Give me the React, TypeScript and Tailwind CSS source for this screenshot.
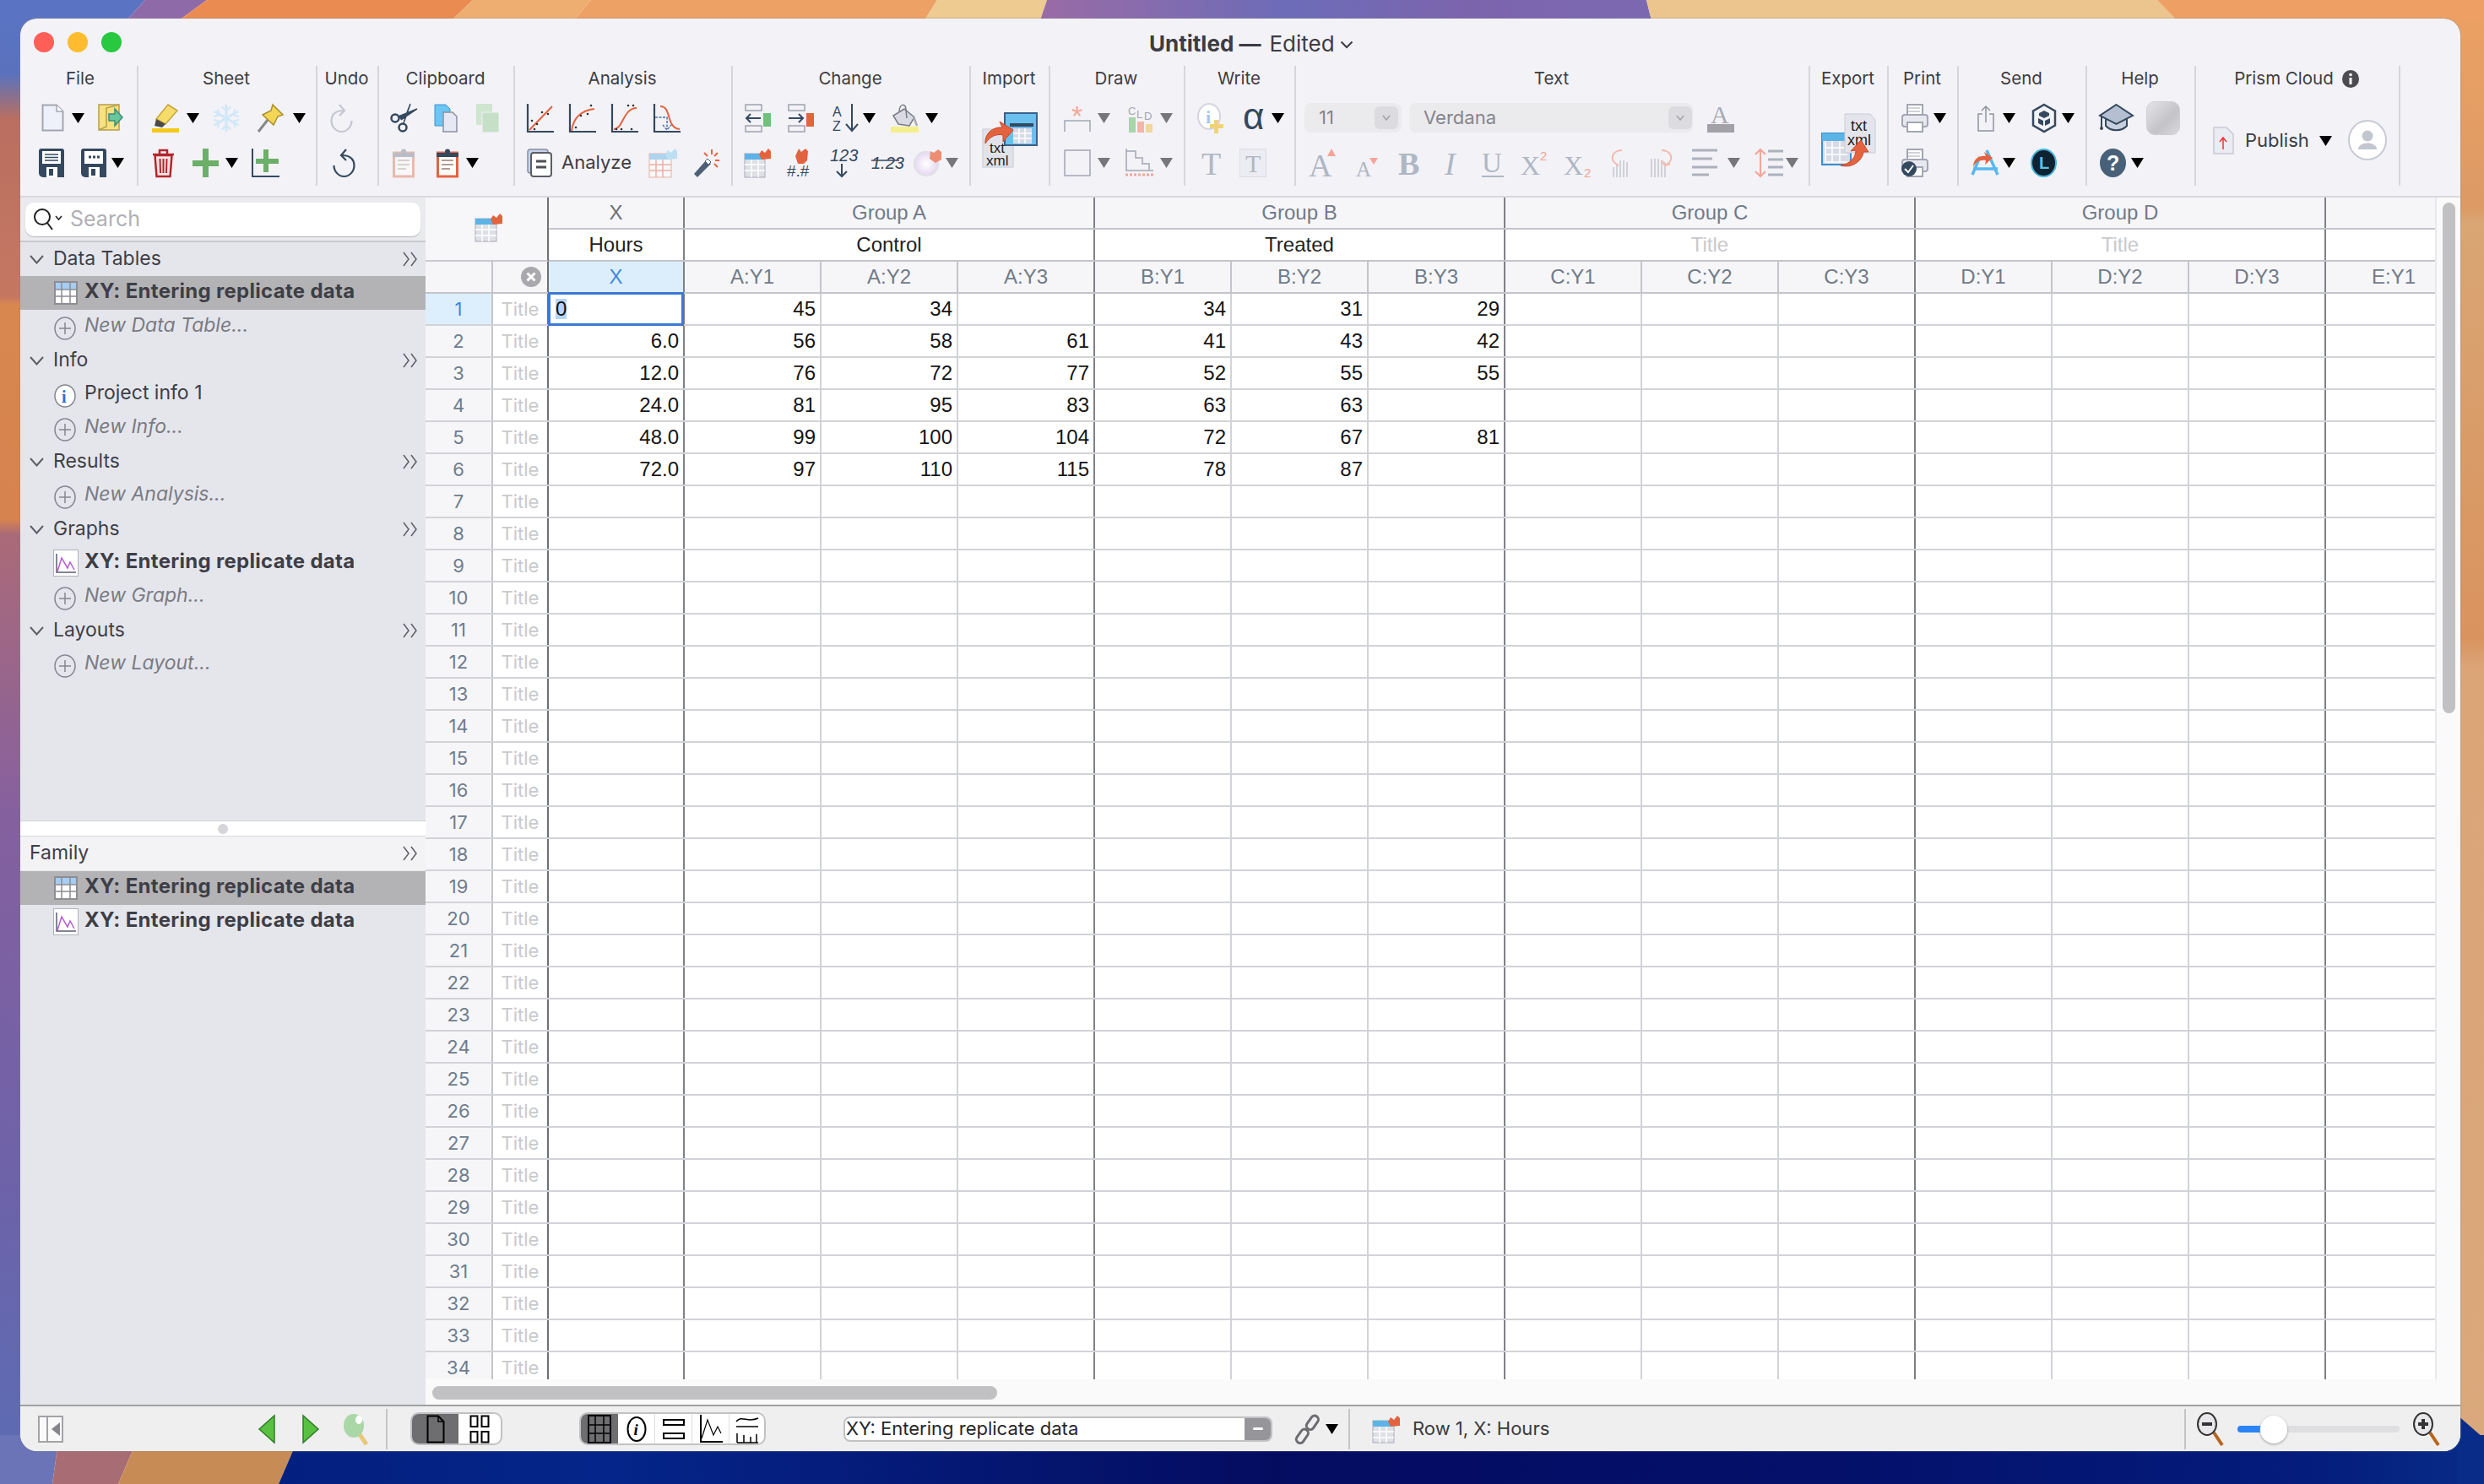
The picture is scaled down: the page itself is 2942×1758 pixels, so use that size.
import React from "react";

const NAVY = "#34495f";
const REDO = "#e4633f";

type P = { className?: string };
const Svg = ({ w, h, className = "", children }: { w: number; h: number; className?: string; children?: React.ReactNode }) => (
  <svg width={w} height={h} viewBox={`0 0 ${w} ${h}`} className={`shrink-0 overflow-visible ${className}`} fill="none">
    {children}
  </svg>
);

const Tri = ({ className = "", gray = false }: P & { gray?: boolean }) => (
  <Svg w={15} h={13} className={className}>
    <path d="M0 1H15L7.5 13z" fill={gray ? "#77777b" : "#000"} />
  </Svg>
);

const Doc = ({ className }: P) => (
  <Svg w={27} h={33} className={className}>
    <path d="M1.5 1.5H18L25.5 9V31.5H1.5z" fill="#eef0fa" stroke="#a3a6b2" strokeWidth="2" />
    <path d="M18 1.5V9H25.5" fill="#fff" stroke="#a3a6b2" strokeWidth="1.5" />
  </Svg>
);
const Folder = ({ className }: P) => (
  <Svg w={30} h={33} className={className}>
    <path d="M1 1H25V31H1z" fill="#f7e27e" stroke="#b69f4e" strokeWidth="1.5" />
    <path d="M1 31L10 27V5L25 1" stroke="#b69f4e" strokeWidth="1.5" />
    <path d="M13 12H20V6L29 16L20 26V20H13z" fill="#67c89e" stroke="#3e8f72" strokeWidth="1.5" />
  </Svg>
);
const Floppy = ({ className, dots = false }: P & { dots?: boolean }) => (
  <Svg w={30} h={34} className={className}>
    <path d="M3 0H27a3 3 0 0 1 3 3V34H5a5 5 0 0 1-5-5V3a3 3 0 0 1 3-3z" fill={NAVY} />
    <rect x="4" y="3" width="22" height="15" fill="#fff" />
    {dots ? (
      <path d="M9 10h3M14 10h3M19 10h3" stroke={NAVY} strokeWidth="3" />
    ) : (
      <path d="M7 7h16M7 10.500h16M7 14h16" stroke={NAVY} strokeWidth="1.500" />
    )}
    <rect x="9" y="22" width="13" height="12" fill="#fff" />
    <rect x="12" y="24" width="5" height="8" fill={NAVY} />
  </Svg>
);
const Highlighter = ({ className }: P) => (
  <Svg w={32} h={34} className={className}>
    <path d="M19 1L30 8L16 24L5 18z" fill="#f6dc6a" stroke="#c8a63a" strokeWidth="1.500" />
    <path d="M5 18L16 24L12 28L3 26z" fill="#4a4a4a" />
    <rect x="0" y="29" width="32" height="5" fill="#f4c81e" />
  </Svg>
);
const Snow = ({ className, color = "#cfe8f8" }: P & { color?: string }) => (
  <Svg w={34} h={34} className={className}>
    <g stroke={color} strokeWidth="3" strokeLinecap="round">
      <path d="M17 2V32M4 9.500L30 24.500M4 24.500L30 9.500" />
      <path d="M12 4L17 8L22 4M12 30L17 26L22 30M3 15L8.500 13L7 7M31 15L25.500 13L27 7M3 19L8.500 21L7 27M31 19L25.500 21L27 27" strokeWidth="2" />
    </g>
  </Svg>
);
const Pin = ({ className }: P) => (
  <Svg w={32} h={34} className={className}>
    <path d="M2 33L13 19" stroke="#888" strokeWidth="3" />
    <path d="M19 1L31 13L25 15L20 25L7 13L17 8z" fill="#f3d653" stroke="#a98f2e" strokeWidth="1.500" />
  </Svg>
);
const Trash = ({ className }: P) => (
  <Svg w={27} h={34} className={className}>
    <path d="M1 7H26M9 6V2H18V6" stroke="#b3262b" strokeWidth="2.500" />
    <path d="M3.500 8L5.500 33H21.500L23.500 8z" fill="#f7e6e6" stroke="#b3262b" strokeWidth="2.500" />
    <path d="M9.500 12L10 29M13.500 12V29M17.500 12L17 29" stroke="#b3262b" strokeWidth="2" />
  </Svg>
);
const Plus = ({ className }: P) => (
  <Svg w={31} h={34} className={className}>
    <path d="M12 0H19V14H31V21H19V34H12V21H0V14H12z" fill="#6caf68" />
  </Svg>
);
const PlusAxis = ({ className }: P) => (
  <Svg w={33} h={34} className={className}>
    <path d="M1 0V33H33" stroke={NAVY} strokeWidth="2" />
    <path d="M14 1H20V12H32V18H20V28H14V18H5V12H14z" fill="#6caf68" />
  </Svg>
);
const Redo = ({ className, color = "#c4c7cf", flip = false }: P & { color?: string; flip?: boolean }) => (
  <Svg w={27} h={34} className={className}>
    <g transform={flip ? "translate(27 0) scale(-1 1)" : undefined} stroke={color} strokeWidth="2.200">
      <path d="M16 8C5 8 1.500 14 1.500 20C1.500 27 7 33 13.500 33C20 33 25.500 27 25.500 20" />
      <path d="M11 1L17 8L11 14" />
    </g>
  </Svg>
);
const Scissors = ({ className }: P) => (
  <Svg w={33} h={34} className={className}>
    <circle cx="6" cy="17" r="4.500" stroke={NAVY} strokeWidth="2.500" />
    <circle cx="15" cy="28" r="4.500" stroke={NAVY} strokeWidth="2.500" />
    <path d="M10 15L32 6L13 19M16 23L24 0L17 18" fill={NAVY} stroke={NAVY} strokeWidth="1.500" />
  </Svg>
);
const CopyI = ({ className }: P) => (
  <Svg w={28} h={34} className={className}>
    <path d="M1 1H14L19 6V26H1z" fill="#6cc5f2" stroke="#3f95d2" />
    <path d="M11 10H22L27 15V33H11z" fill="#e6e8f4" stroke="#8c90a0" strokeWidth="1.500" />
  </Svg>
);
const CopyG = ({ className }: P) => (
  <Svg w={27} h={34} className={className}>
    <rect x="0" y="0" width="19" height="25" fill="#cfe5cf" />
    <rect x="7" y="10" width="20" height="24" fill="#c6e0c8" stroke="#f3f2f7" />
  </Svg>
);
const Clip = ({ className, faded = false }: P & { faded?: boolean }) => (
  <Svg w={26} h={34} className={className}>
    <g opacity={faded ? 0.4 : 1}>
      <rect x="1.500" y="5" width="23" height="28" fill="#fff" stroke={REDO} strokeWidth="3" />
      <path d="M6 14H20M6 19H20M6 24H16" stroke="#9a7f70" strokeWidth="1.500" />
    </g>
    <rect x="0" y="5" width="26" height="5" fill={faded ? "#b9bdc6" : NAVY} />
    <circle cx="13" cy="3.500" r="3" fill={faded ? "#b9bdc6" : NAVY} />
  </Svg>
);
const Graph = ({ className, d, dots, drop = false }: P & { d: string; dots: [number, number][]; drop?: boolean }) => (
  <Svg w={32} h={34} className={className}>
    <path d="M1 0V33H32" stroke={NAVY} strokeWidth="2.200" />
    <path d={d} stroke={REDO} strokeWidth="2" />
    {drop && <path d="M2 16H16V30M11 25L16 31L21 25" stroke="#4a76a8" strokeWidth="1.500" strokeDasharray="3 1.500" />}
    {dots.map((c, i) => (
      <circle key={i} cx={c[0]} cy={c[1]} r="1.300" fill="#333" />
    ))}
  </Svg>
);
const AnalyzeI = ({ className }: P) => (
  <Svg w={30} h={34} className={className}>
    <rect x="1" y="1" width="24" height="28" rx="3" fill="#c5d3ee" stroke="#8b8f9a" strokeWidth="1.500" />
    <rect x="5" y="5" width="24" height="28" rx="3" fill="#fff" stroke="#5c5e64" strokeWidth="2" />
    <path d="M11 15H23M11 22H23" stroke="#4d4f55" strokeWidth="3" />
  </Svg>
);
const Tbl = ({ className, tag = true, faded = false, w = 31, h = 34 }: P & { tag?: boolean; faded?: boolean; w?: number; h?: number }) => (
  <Svg w={w} h={h} className={className}>
    <g opacity={faded ? 0.45 : 1}>
      <rect x="0" y="6" width={w - 7} height={h - 6} fill={faded ? "#fff" : "#dfe0e6"} stroke={faded ? REDO : "#a8abb5"} strokeWidth={1} />
      <rect x="0" y="6" width={w - 7} height="7" fill="#5cb4e6" />
      <path d={`M8 13V${h}M16 13V${h}M0 19H${w - 7}M0 26H${w - 7}`} stroke={faded ? REDO : "#fff"} strokeWidth="1.500" />
    </g>
    {tag && <path d={`M${w - 11} 2L${w - 7} 5L${w - 3} 0L${w} 3V12L${w - 11} 13L${w - 14} 7z`} fill={faded ? "#bcdff2" : REDO} />}
  </Svg>
);
const ArrowCols = ({ className, right = false, color = "#6fc27a" }: P & { right?: boolean; color?: string }) => (
  <Svg w={32} h={34} className={className}>
    <rect x="1" y="1" width="19" height="7" stroke="#9fa3ae" strokeWidth="1.500" />
    <rect x="1" y="26" width="19" height="7" stroke="#9fa3ae" strokeWidth="1.500" />
    <rect x="22" y="11" width="9" height="16" fill={color} />
    <path d={right ? "M1 17H18M13 12L18 17L13 22" : "M19 17H2M7 12L2 17L7 22"} stroke={NAVY} strokeWidth="2" />
  </Svg>
);
const Sort = ({ className }: P) => (
  <Svg w={31} h={34} className={className}>
    <text x="0" y="15" fontSize="16" fontFamily="Liberation Sans" fill={NAVY}>A</text>
    <text x="0" y="32" fontSize="16" fontFamily="Liberation Sans" fill={NAVY}>Z</text>
    <path d="M23 0V32M16 24L23 32L30 24" stroke={NAVY} strokeWidth="2" />
  </Svg>
);
const Bucket = ({ className }: P) => (
  <Svg w={33} h={34} className={className}>
    <path d="M16 6L28 16L22 26L9 24L3 14z" fill="#d9dae4" stroke="#777b86" strokeWidth="1.500" />
    <path d="M10 10C10 -1 18 -1 18 7L19 17" stroke="#777b86" strokeWidth="1.500" />
    <path d="M27 15L31 26" stroke="#a9abb3" strokeWidth="2.500" />
    <rect x="0" y="27" width="33" height="7" fill="#f4ef8c" />
  </Svg>
);
const HashI = ({ className }: P) => (
  <Svg w={31} h={34} className={className}>
    <path d="M14 0L17 4L22 0L25 3L24 14L20 18H13L10 9z" fill={REDO} />
    <text x="0" y="33" fontSize="19" fontFamily="Liberation Sans" fill={NAVY}>#.#</text>
  </Svg>
);
const N123 = ({ className }: P) => (
  <Svg w={30} h={34} className={className}>
    <text x="0" y="15" fontSize="20" fontStyle="italic" fontFamily="Liberation Sans" fill={NAVY}>123</text>
    <path d="M14 18V33M8 27L14 33L20 27" stroke={NAVY} strokeWidth="2" />
  </Svg>
);
const N123b = ({ className }: P) => (
  <Svg w={33} h={20} className={className}>
    <text x="0" y="17" fontSize="20" fontStyle="italic" fontFamily="Liberation Sans" fill={NAVY}>1.23</text>
    <path d="M0 7L33 7" stroke={NAVY} strokeWidth="1.500" />
  </Svg>
);
const Wheel = ({ className }: P) => (
  <Svg w={33} h={34} className={className}>
    <defs>
      <radialGradient id="wh" cx="50%" cy="50%" r="60%">
        <stop offset="0" stopColor="#fff" />
        <stop offset="0.7" stopColor="#e8dcf2" />
        <stop offset="1" stopColor="#cfe3c2" />
      </radialGradient>
    </defs>
    <circle cx="15" cy="18" r="15" fill="url(#wh)" />
    <path d="M20 3L24 5L29 1L33 4V13L26 17L19 12z" fill="#ef8d72" />
  </Svg>
);
const ImportI = ({ className, exportMode = false }: P & { exportMode?: boolean }) =>
  exportMode ? (
    <Svg w={63} h={65} className={className}>
      <rect x="0" y="24" width="34" height="37" fill="#d8dae6" stroke="#3d8ed0" strokeWidth="2" />
      <rect x="0" y="24" width="34" height="9" fill="#5cb4e6" />
      <path d="M4 33V58H30M4 41H30M4 49H30M12 33V58M21 33V58" stroke="#fff" strokeWidth="1.500" />
      <path d="M27 1H57L63 8V47H27z" fill="#e4e5ec" stroke="#c8cad3" />
      <text x="34" y="21" fontSize="18" fontFamily="Liberation Sans" fill="#222">txt</text>
      <text x="30" y="38" fontSize="18" fontFamily="Liberation Sans" fill="#222">xml</text>
      <path d="M22 62C34 60 40 52 40 44L34 45L46 32L55 46L49 46C48 56 36 66 22 62z" fill={REDO} stroke="#c7492a" />
    </Svg>
  ) : (
    <Svg w={64} h={65} className={className}>
      <rect x="0" y="19" width="36" height="45" fill="#e2e3ea" stroke="#c8cad3" />
      <rect x="26" y="0" width="38" height="38" fill="#6bc1ee" stroke="#39618a" strokeWidth="2" />
      <rect x="32" y="12" width="28" height="4" fill={NAVY} />
      <path d="M36 18H58V36H36z" fill="#d8dae6" />
      <path d="M36 24H58M36 30H58M43 18V36M50 18V36" stroke="#fff" strokeWidth="1.500" />
      <path d="M3 36C2 24 12 16 23 17L20 10L36 20L24 34L24 26C16 24 8 28 3 36z" fill={REDO} stroke="#c7492a" />
      <text x="8" y="47" fontSize="17" fontFamily="Liberation Sans" fill="#222">txt</text>
      <text x="4" y="62" fontSize="17" fontFamily="Liberation Sans" fill="#222">xml</text>
    </Svg>
  );
const Star = ({ className }: P) => (
  <Svg w={32} h={34} className={className}>
    <text x="9" y="26" fontSize="34" fontFamily="Liberation Sans" fill="#f2a89a">*</text>
    <path d="M1 33V20H31V33" stroke="#a3a6b2" strokeWidth="1.500" />
  </Svg>
);
const Cld = ({ className }: P) => (
  <Svg w={29} h={34} className={className}>
    <text x="0" y="13" fontSize="13" fontFamily="Liberation Sans" fill="#a0a8b4">C</text>
    <text x="10" y="17" fontSize="13" fontFamily="Liberation Sans" fill="#a0a8b4">L</text>
    <text x="19" y="19" fontSize="13" fontFamily="Liberation Sans" fill="#a0a8b4">D</text>
    <rect x="1" y="16" width="8" height="18" fill="#a7d4a9" />
    <rect x="11" y="21" width="8" height="13" fill="#f3b5a7" />
    <rect x="21" y="24" width="8" height="10" fill="#f2d79a" />
  </Svg>
);
const RectI = ({ className }: P) => (
  <Svg w={32} h={32} className={className}>
    <rect x="1" y="1" width="30" height="30" stroke="#a3a6b2" strokeWidth="1.500" />
  </Svg>
);
const Step = ({ className }: P) => (
  <Svg w={33} h={34} className={className}>
    <path d="M1 0V26H33" stroke="#a3a6b2" strokeWidth="1.500" />
    <path d="M1 3H12V11H20V18H28V25" stroke="#a3a6b2" strokeWidth="1.500" />
    <path d="M0 31H33" stroke="#f2a89a" strokeWidth="3" strokeDasharray="3 2" />
  </Svg>
);
const InfoPlus = ({ className }: P) => (
  <Svg w={33} h={36} className={className}>
    <ellipse cx="14" cy="16" rx="13" ry="15" fill="#fff" stroke="#d3d5dc" strokeWidth="2" />
    <text x="10" y="24" fontSize="22" fontWeight="700" fontFamily="Liberation Serif" fill="#a8c6ea">i</text>
    <path d="M20 20H25V25H31V30H25V36H20V30H15V25H20z" fill="#f1d27c" />
  </Svg>
);
const Serif = ({ t, w, h, size, x, y, color = "#aeb7c4", weight, sty, className, fam = "Liberation Serif" }: P & { t: string; w: number; h: number; size: number; x: number; y: number; color?: string; weight?: number; sty?: string; fam?: string }) => (
  <Svg w={w} h={h} className={className}>
    <text x={x} y={y} fontSize={size} fontWeight={weight} fontStyle={sty} fontFamily={fam} fill={color}>
      {t}
    </text>
  </Svg>
);
const BigA = ({ className, small = false, down = false }: P & { small?: boolean; down?: boolean }) => (
  <Svg w={small ? 26 : 32} h={34} className={className}>
    <text x="0" y="33" fontSize={small ? 25 : 38} fontFamily="Liberation Serif" fill="#aeb7c4">A</text>
    {down ? <path d="M16 11H26L21 19z" fill="#f4a596" /> : <path d="M22 9H32L27 0z" fill="#f4a596" />}
  </Svg>
);
const Sup = ({ className, sub = false }: P & { sub?: boolean }) => (
  <Svg w={34} h={34} className={className}>
    <text x="0" y="31" fontSize="32" fontFamily="Liberation Serif" fill="#aeb7c4">X</text>
    <text x={sub ? 24 : 23} y={sub ? 34 : 14} fontSize="15" fontFamily="Liberation Sans" fill="#f4a596">2</text>
  </Svg>
);
const Bars = ({ className, right = false }: P & { right?: boolean }) => (
  <Svg w={30} h={34} className={className}>
    <path d={right ? "M2 12V34M6 12V34M10 12V34M14 14V34M18 16V34" : "M6 22V34M10 18V34M14 14V34M18 14V34M22 16V34"} stroke="#c4c7ce" strokeWidth="1.500" />
    <path d={right ? "M14 2C26 2 30 14 18 20M14 14L18 20L24 18" : "M16 2C4 2 0 14 12 20"} stroke="#f6b8ab" strokeWidth="2" />
  </Svg>
);
const Align = ({ className }: P) => (
  <Svg w={34} h={33} className={className}>
    <path d="M0 2H30M0 12H24M0 22H30M0 31H20" stroke="#adb1bb" strokeWidth="3" />
  </Svg>
);
const LineH = ({ className }: P) => (
  <Svg w={34} h={34} className={className}>
    <path d="M7 1V33M1 7L7 1L13 7M1 27L7 33L13 27" stroke="#f4a596" strokeWidth="2" />
    <path d="M16 3H34M16 13H34M16 22H34M16 31H34" stroke="#adb1bb" strokeWidth="3" />
  </Svg>
);
const Printer = ({ className, check = false }: P & { check?: boolean }) => (
  <Svg w={32} h={34} className={className}>
    <rect x="7" y="1" width="18" height="12" fill="#fff" stroke="#a3a6b2" strokeWidth="2" />
    <path d="M8 5H22M8 9H22" stroke="#a3a6b2" />
    <rect x="1" y="13" width="30" height="14" rx="3" fill="#e7e8f0" stroke="#a3a6b2" strokeWidth="2" />
    <rect x="7" y="22" width="18" height="11" fill="#fff" stroke="#a3a6b2" strokeWidth="2" />
    {check && (
      <>
        <circle cx="9" cy="24" r="9" fill={NAVY} />
        <path d="M4 24L8 28L14 20" stroke="#fff" strokeWidth="2" />
      </>
    )}
  </Svg>
);
const Share = ({ className }: P) => (
  <Svg w={20} h={32} className={className}>
    <path d="M6 11H1V31H19V11H14" stroke="#8f939e" strokeWidth="1.500" />
    <path d="M10 21V2M5 7L10 2L15 7" stroke="#8f939e" strokeWidth="1.500" />
  </Svg>
);
const Hex = ({ className }: P) => (
  <Svg w={28} h={34} className={className}>
    <path d="M14 1L27 8.500V25.500L14 33L1 25.500V8.500z" stroke={NAVY} strokeWidth="2.500" />
    <path d="M8 11L14 8L20 11V14L14 17L8 14zM7 17L13 20V26L7 23zM21 17L15 20V26L21 23z" fill={NAVY} />
  </Svg>
);
const AppI = ({ className }: P) => (
  <Svg w={33} h={34} className={className}>
    <path d="M19 2L32 31M3 24H32M11 10L2 31" stroke="#58b9ee" strokeWidth="3.500" />
    <path d="M3 22C3 12 10 8 18 9L16 4L26 11L17 19L18 14C10 13 6 16 3 22z" fill={REDO} />
  </Svg>
);
const LCircle = ({ className }: P) => (
  <Svg w={31} h={34} className={className}>
    <ellipse cx="15.500" cy="17" rx="14.500" ry="16" fill="#0e2231" stroke="#43b4d8" strokeWidth="2" />
    <text x="10" y="24" fontSize="20" fontWeight="700" fontFamily="Liberation Sans" fill="#5cc1e6">L</text>
  </Svg>
);
const Cap = ({ className }: P) => (
  <Svg w={41} h={34} className={className}>
    <path d="M8 14V26C14 33 27 33 33 26V14" fill="#c7d0de" stroke={NAVY} strokeWidth="2" />
    <path d="M20.500 1L40 14L20.500 24L1 14z" fill="#b4c0d2" stroke={NAVY} strokeWidth="2" />
    <path d="M3 15V28" stroke={NAVY} strokeWidth="2" />
    <circle cx="3" cy="29" r="2" fill={NAVY} />
  </Svg>
);
const Help = ({ className }: P) => (
  <Svg w={31} h={34} className={className}>
    <ellipse cx="15.500" cy="17" rx="15.500" ry="17" fill="#486178" />
    <text x="8" y="26" fontSize="25" fontWeight="700" fontFamily="Liberation Sans" fill="#fff">?</text>
  </Svg>
);
const DocUp = ({ className }: P) => (
  <Svg w={25} h={33} className={className}>
    <path d="M1 1H16L24 9V32H1z" fill="#ebebf2" stroke="#c9cad2" strokeWidth="1.500" />
    <path d="M12 27V13M8 18L12 13L16 18" stroke="#e23b2d" strokeWidth="1.500" />
  </Svg>
);
const Avatar = ({ className }: P) => (
  <Svg w={46} h={48} className={className}>
    <ellipse cx="23" cy="24" rx="22" ry="23" fill="#fff" stroke="#c8cbd3" strokeWidth="2" />
    <circle cx="23" cy="19" r="6.500" fill="#c2c6ce" />
    <path d="M12 35C12 25 34 25 34 35z" fill="#c2c6ce" />
  </Svg>
);
const Wand = ({ className }: P) => (
  <Svg w={31} h={34} className={className}>
    <path d="M1 30L16 13L21 18L5 34z" fill="#4d6075" />
    <path d="M14 15L17 12L21 16L18 19z" fill="#fff" stroke="#4d6075" />
    <path d="M22 1V7M29 5L25 9M31 14H26M29 22L25 18M13 5L17 9" stroke={REDO} strokeWidth="2" />
  </Svg>
);

const Sec = ({ w, label, children, center = false, shift = "" }: { w: string; label: React.ReactNode; children: React.ReactNode; center?: boolean; shift?: string }) => (
  <div className={`${w} h-[142px] shrink-0 border-r-2 border-[#d6d6db]`}>
    <div className={`h-[30px] flex items-center justify-center text-[#3d3d42] text-[20.5px] whitespace-nowrap pr-[2px] ${shift}`}>{label}</div>
    <div className={`mt-[5px] h-[106px] flex flex-col ${center ? "justify-center" : ""}`}>{children}</div>
  </div>
);
const R = ({ children }: { children: React.ReactNode }) => <div className="h-[53px] flex items-center">{children}</div>;

const Toolbar = () => (
  <div className="flex h-[156px] pb-[14px] bg-[#f3f2f7] border-b-2 border-[#d9d9de]">
    <Sec w="w-[140px]" label="File" shift="pl-[6px]">
      <R><Doc className="ml-[25px]" /><Tri className="ml-[9px]" /><Folder className="ml-[16px]" /></R>
      <R><Floppy className="ml-[22px]" /><Floppy dots className="ml-[20px]" /><Tri className="ml-[6px]" /></R>
    </Sec>
    <Sec w="w-[212px]" label="Sheet">
      <R><Highlighter className="ml-[16px]" /><Tri className="ml-[9px]" /><Snow className="ml-[15px]" /><Pin className="ml-[19px]" /><Tri className="ml-[11px]" /></R>
      <R><Trash className="ml-[16px]" /><Plus className="ml-[21px]" /><Tri className="ml-[8px]" /><PlusAxis className="ml-[16px]" /></R>
    </Sec>
    <Sec w="w-[73px]" label="Undo">
      <R><Redo className="ml-[15px]" /></R>
      <R><Redo flip color={NAVY} className="ml-[18px]" /></R>
    </Sec>
    <Sec w="w-[161px]" label="Clipboard">
      <R><Scissors className="ml-[13px]" /><CopyI className="ml-[19px]" /><CopyG className="ml-[22px]" /></R>
      <R><Clip faded className="ml-[16px]" /><Clip className="ml-[26px]" /><Tri className="ml-[9px]" /></R>
    </Sec>
    <Sec w="w-[258px]" label="Analysis">
      <R>
        <Graph className="ml-[14px]" d="M3 31L30 3" dots={[[6, 20], [12, 24], [18, 10], [25, 12], [9, 30]]} />
        <Graph className="ml-[18px]" d="M3 32C5 16 14 8 30 6" dots={[[8, 28], [14, 14], [22, 12], [26, 2]]} />
        <Graph className="ml-[18px]" d="M3 30C14 30 14 5 30 5" dots={[[6, 30], [12, 30], [20, 2], [26, 2], [24, 30]]} />
        <Graph className="ml-[18px]" drop d="M8 3C22 3 14 28 31 30" dots={[]} />
      </R>
      <R>
        <AnalyzeI className="ml-[14px]" />
        <span className="ml-[11px] w-[81px] text-[22px] text-[#3d3d42] whitespace-nowrap">Analyze</span>
        <Tbl tag faded className="ml-[23px]" w={33} />
        <Wand className="ml-[19px]" />
      </R>
    </Sec>
    <Sec w="w-[282px]" label="Change">
      <R><ArrowCols className="ml-[14px]" /><ArrowCols right color={REDO} className="ml-[19px]" /><Sort className="ml-[21px]" /><Tri className="ml-[5px]" /><Bucket className="ml-[18px]" /><Tri className="ml-[8px]" /></R>
      <R><Tbl className="ml-[14px]" /><HashI className="ml-[19px]" /><N123 className="ml-[20px]" /><N123b className="ml-[19px]" /><Wheel className="ml-[17px]" /><Tri gray className="ml-[5px]" /></R>
    </Sec>
    <Sec w="w-[94px]" label="Import" center>
      <ImportI className="ml-[14px]" />
    </Sec>
    <Sec w="w-[160px]" label="Draw">
      <R><Star className="ml-[16px]" /><Tri gray className="ml-[8px]" /><Cld className="ml-[21px]" /><Tri gray className="ml-[9px]" /></R>
      <R><RectI className="ml-[16px]" /><Tri gray className="ml-[8px]" /><Step className="ml-[18px]" /><Tri gray className="ml-[8px]" /></R>
    </Sec>
    <Sec w="w-[131px]" label="Write">
      <R><InfoPlus className="ml-[14px]" /><Serif t="α" w={25} h={34} size={44} x={0} y={30} color={NAVY} fam="Liberation Sans" className="ml-[21px]" /><Tri className="ml-[9px]" /></R>
      <R>
        <Serif t="T" w={25} h={34} size={38} x={1} y={31} weight={400} className="ml-[18px]" />
        <Svg w={32} h={34} className="ml-[21px]">
          <rect x="0.500" y="0.500" width="31" height="33" fill="#ecedf2" stroke="#dcdde3" />
          <text x="7" y="28" fontSize="30" fontFamily="Liberation Serif" fill="#aeb7c4">T</text>
        </Svg>
      </R>
    </Sec>
    <Sec w="w-[609px]" label="Text">
      <R>
        <div className="ml-[10px] w-[115px] h-[35px] rounded-[8px] bg-[#ebebee] flex items-center justify-between pl-[17px] pr-[4px] text-[#85858b] text-[22px]">
          <span>11</span>
          <span className="w-[28px] h-[27px] rounded-[6px] bg-[#dcdce0] flex items-center justify-center">
            <svg width="10" height="8" viewBox="0 0 10 8" fill="none"><path d="M1 1L5 6L9 1" stroke="#a2a2a8" strokeWidth="1.500" /></svg>
          </span>
        </div>
        <div className="ml-[9px] w-[336px] h-[35px] rounded-[8px] bg-[#ebebee] flex items-center justify-between pl-[17px] pr-[1px] text-[#85858b] text-[22px]">
          <span>Verdana</span>
          <span className="w-[28px] h-[27px] rounded-[6px] bg-[#dcdce0] flex items-center justify-center">
            <svg width="10" height="8" viewBox="0 0 10 8" fill="none"><path d="M1 1L5 6L9 1" stroke="#a2a2a8" strokeWidth="1.500" /></svg>
          </span>
        </div>
        <Svg w={32} h={36} className="ml-[17px]">
          <text x="4" y="24" fontSize="30" fontFamily="Liberation Serif" fill="#a9abb2">A</text>
          <rect x="0" y="25" width="32" height="10" fill="#a2a1a8" />
        </Svg>
      </R>
      <R>
        <BigA className="ml-[15px]" />
        <BigA small down className="ml-[24px]" />
        <Serif t="B" w={26} h={34} size={38} x={0} y={31} weight={700} className="ml-[24px]" />
        <Serif t="I" w={18} h={34} size={38} x={1} y={31} sty="italic" className="ml-[28px]" />
        <Svg w={26} h={34} className="ml-[27px]">
          <text x="0" y="28" fontSize="33" fontFamily="Liberation Serif" fill="#aeb7c4">U</text>
          <path d="M0 33H26" stroke="#aeb7c4" strokeWidth="2" />
        </Svg>
        <Sup className="ml-[20px]" />
        <Sup sub className="ml-[17px] -mr-[2px]" />
        <Bars className="ml-[21px] -mr-[2px]" />
        <Bars right className="ml-[21px]" />
        <Align className="ml-[20px]" />
        <Tri gray className="ml-[8px]" />
        <LineH className="ml-[17px]" />
        <Tri gray className="ml-[3px]" />
      </R>
    </Sec>
    <Sec w="w-[93px]" label="Export" center>
      <ImportI exportMode className="ml-[14px]" />
    </Sec>
    <Sec w="w-[83px]" label="Print">
      <R><Printer className="ml-[15px]" /><Tri className="ml-[6px]" /></R>
      <R><Printer check className="ml-[15px]" /></R>
    </Sec>
    <Sec w="w-[152px]" label="Send">
      <R><Share className="ml-[22px]" /><Tri className="ml-[10px]" /><Hex className="ml-[20px]" /><Tri className="ml-[7px]" /></R>
      <R><AppI className="ml-[14px]" /><Tri className="ml-[5px]" /><LCircle className="ml-[18px]" /></R>
    </Sec>
    <Sec w="w-[129px]" label="Help">
      <R>
        <Cap className="ml-[14px]" />
        <div className="ml-[15px] w-[40px] h-[40px] rounded-[10px] bg-[linear-gradient(135deg,#e4e4e8,#c4c4c8_60%,#dadade)] border border-[#cfcfd4]" />
      </R>
      <R><Help className="ml-[15px]" /><Tri className="ml-[6px]" /></R>
    </Sec>
    <Sec
      w="w-[242px]"
      center
      label={
        <span className="flex items-center gap-[10px]">
          Prism Cloud
          <svg width="20" height="21" viewBox="0 0 20 21"><ellipse cx="10" cy="10.500" rx="10" ry="10.500" fill="#4b4b50" /><rect x="8.500" y="9" width="3" height="8" fill="#fff" /><circle cx="10" cy="5.500" r="1.800" fill="#fff" /></svg>
        </span>
      }
    >
      <div className="flex items-center">
        <DocUp className="ml-[20px]" />
        <span className="ml-[13px] w-[76px] text-[22px] text-[#3d3d42]">Publish</span>
        <Tri className="ml-[12px]" />
        <Avatar className="ml-[19px]" />
      </div>
    </Sec>
  </div>
);

const Chev = () => (
  <svg width="17" height="11" viewBox="0 0 17 11" fill="none" className="shrink-0"><path d="M1 1L8.500 9.500L16 1" stroke="#5d5d64" strokeWidth="2" /></svg>
);
const DChev = () => (
  <svg width="17" height="18" viewBox="0 0 17 18" fill="none" className="shrink-0"><path d="M1 1L7 9L1 17M10 1L16 9L10 17" stroke="#5d5d64" strokeWidth="1.500" /></svg>
);
const TreeHead = ({ t, bar = false }: { t: string; bar?: boolean }) => (
  <div className={`h-[40px] flex items-center text-[23px] text-[#3f3f46] pl-[11px] ${bar ? "bg-[#f3f3f6]" : ""}`}>
    {!bar && <Chev />}
    <span className={`-mt-[2px] ${bar ? "" : "ml-[11px]"}`}>{t}</span>
    <span className="ml-auto mr-[10px]"><DChev /></span>
  </div>
);
const PlusRow = ({ t }: { t: string }) => (
  <div className="h-[40px] flex items-center pl-[40px] text-[23px] italic text-[#7a7b83]">
    <svg width="26" height="28" viewBox="0 0 26 28" fill="none" className="shrink-0 mt-[4px]"><ellipse cx="13" cy="14" rx="12" ry="13" stroke="#85868e" strokeWidth="1.500" /><path d="M13 7V21M6 14H20" stroke="#85868e" strokeWidth="1.500" /></svg>
    <span className="ml-[10px] -mt-[4px]">{t}</span>
  </div>
);
const TblRowIcon = () => (
  <svg width="28" height="28" viewBox="0 0 28 28" fill="none" className="shrink-0">
    <rect x="1" y="1" width="26" height="26" fill="#fff" stroke="#8d8d93" strokeWidth="2" />
    <rect x="2" y="2" width="24" height="8" fill="#a6cdf3" />
    <path d="M9 2V26M19 2V26M2 10H26M2 18H26" stroke="#8d8d93" strokeWidth="1.500" />
  </svg>
);
const GraphRowIcon = () => (
  <svg width="30" height="32" viewBox="0 0 30 32" fill="none" className="shrink-0">
    <rect x="0.500" y="0.500" width="29" height="31" fill="#fff" stroke="#b1b2b8" />
    <path d="M4 5V27H27" stroke="#5c5d70" strokeWidth="1.500" />
    <path d="M5 26L10 10L17 22L20 15L25 24" stroke="#b65bd1" strokeWidth="1.500" />
  </svg>
);
const ItemRow = ({ icon, sel = false }: { icon: React.ReactNode; sel?: boolean }) => (
  <div className={`h-[40px] flex items-center pl-[39px] text-[24px] font-bold tracking-[0.3px] text-[#3e3e46] ${sel ? "bg-[#b3b3b5]" : ""}`}>
    <span className="w-[30px] flex justify-center">{icon}</span>
    <span className="ml-[7px] -mt-[4px] whitespace-nowrap">XY: Entering replicate data</span>
  </div>
);

const Sidebar = () => (
  <div className="w-[480px] shrink-0 h-full flex flex-col bg-[#e5e6ec] text-[23px]">
    <div className="h-[53px] bg-[#eaebef] border-b-2 border-[#c9cad0] pt-[6px] pl-[6px]">
      <div className="w-[468px] h-[40px] rounded-[10px] bg-white shadow-[0_1px_1px_#b5b5ba] flex items-center pl-[9px] text-[#b0b0b5] text-[25px]">
        <svg width="42" height="28" viewBox="0 0 42 28" fill="none" className="shrink-0"><circle cx="11" cy="11" r="9" stroke="#1f1f22" strokeWidth="2" /><path d="M17 18L23 26" stroke="#1f1f22" strokeWidth="2" /><path d="M27 10L30.500 14L34 10" stroke="#1f1f22" strokeWidth="1.500" /></svg>
        <span className="ml-[2px]">Search</span>
      </div>
    </div>
    <div className="h-[686px] border-b border-[#d0d1d6]">
      <TreeHead t="Data Tables" />
      <ItemRow sel icon={<TblRowIcon />} />
      <PlusRow t="New Data Table..." />
      <TreeHead t="Info" />
      <div className="h-[40px] flex items-center pl-[40px] text-[#3e3e46]">
        <svg width="26" height="28" viewBox="0 0 26 28" fill="none" className="shrink-0 mt-[4px]"><ellipse cx="13" cy="14" rx="12" ry="13" fill="#fff" stroke="#85868e" strokeWidth="1.500" /><text x="9" y="22" fontSize="20" fontWeight="700" fontFamily="Liberation Serif" fill="#2f6fd0">i</text></svg>
        <span className="ml-[10px] -mt-[4px]">Project info 1</span>
      </div>
      <PlusRow t="New Info..." />
      <TreeHead t="Results" />
      <PlusRow t="New Analysis..." />
      <TreeHead t="Graphs" />
      <ItemRow icon={<GraphRowIcon />} />
      <PlusRow t="New Graph..." />
      <TreeHead t="Layouts" />
      <PlusRow t="New Layout..." />
    </div>
    <div className="h-[18px] bg-white border-b border-[#d9d9dd] flex items-center justify-center">
      <span className="w-[12px] h-[12px] rounded-full bg-[#d6d6da]" />
    </div>
    <TreeHead t="Family" bar />
    <div className="mt-[1px]">
      <ItemRow sel icon={<TblRowIcon />} />
      <ItemRow icon={<GraphRowIcon />} />
    </div>
  </div>
);

const DATA: string[][] = [
  ["0", "45", "34", "", "34", "31", "29"],
  ["6.0", "56", "58", "61", "41", "43", "42"],
  ["12.0", "76", "72", "77", "52", "55", "55"],
  ["24.0", "81", "95", "83", "63", "63", ""],
  ["48.0", "99", "100", "104", "72", "67", "81"],
  ["72.0", "97", "110", "115", "78", "87", ""],
];
const COLS = ["X", "A:Y1", "A:Y2", "A:Y3", "B:Y1", "B:Y2", "B:Y3", "C:Y1", "C:Y2", "C:Y3", "D:Y1", "D:Y2", "D:Y3", "E:Y1"];
const isGroupEnd = (i: number) => i % 3 === 0;
const GroupCell = ({ t, w, cls = "" }: { t: string; w: string; cls?: string }) => (
  <div className={`${w} shrink-0 h-full border-r-2 border-[#7f8087] flex items-center justify-center ${cls}`}>{t}</div>
);

const Grid = () => (
  <div className="w-[2380px] shrink-0 h-full overflow-hidden bg-white font-['Liberation_Sans',sans-serif] text-[24px]">
    <div className="flex h-[76px]">
      <div className="w-[146px] shrink-0 bg-[#f7f7f9] border-r-2 border-[#6e6f77] border-b-2 border-b-[#c9cacf] flex items-center justify-center pl-[6px] pb-[4px]">
        <Tbl w={32} h={33} />
      </div>
      <div className="flex-1 min-w-0">
        <div className="h-[38px] flex bg-[#f6f6f8] border-b-2 border-[#c4c5cb] text-[#717b88]">
          <GroupCell t="X" w="w-[161px]" cls="text-[#6c6f78]" />
          <GroupCell t="Group A" w="w-[486px]" />
          <GroupCell t="Group B" w="w-[486px]" />
          <GroupCell t="Group C" w="w-[486px]" />
          <GroupCell t="Group D" w="w-[486px]" />
          <GroupCell t="" w="w-[486px]" />
        </div>
        <div className="h-[38px] flex bg-white border-b-2 border-[#c4c5cb] text-[#1f1f22]">
          <GroupCell t="Hours" w="w-[161px]" />
          <GroupCell t="Control" w="w-[486px]" />
          <GroupCell t="Treated" w="w-[486px]" />
          <GroupCell t="Title" w="w-[486px]" cls="text-[#c9c9cc]" />
          <GroupCell t="Title" w="w-[486px]" cls="text-[#c9c9cc]" />
          <GroupCell t="" w="w-[486px]" />
        </div>
      </div>
    </div>
    <div className="flex h-[38px] bg-[#f6f6f8] border-b-2 border-[#c4c5cb] text-[#717b88]">
      <div className="w-[80px] shrink-0 border-r-2 border-[#c4c5cb]" />
      <div className="w-[66px] shrink-0 border-r-2 border-[#6e6f77] flex items-center justify-end pr-[7px]">
        <svg width="24" height="24" viewBox="0 0 24 24" fill="none"><circle cx="12" cy="12" r="12" fill="#a9a9ad" /><path d="M7.500 7.500L16.500 16.500M16.500 7.500L7.500 16.500" stroke="#fff" strokeWidth="3" /></svg>
      </div>
      {COLS.map((c, i) => (
        <div
          key={c}
          className={`${i === 0 ? "w-[161px] bg-[#dceefc] text-[#3f87e0]" : "w-[162px]"} shrink-0 border-r-2 ${isGroupEnd(i) ? "border-[#7f8087]" : "border-[#c4c5cb]"} flex items-center justify-center`}
        >
          {c}
        </div>
      ))}
    </div>
    {Array.from({ length: 34 }, (_, r) => (
      <div key={r} className="flex h-[38px] border-b-2 border-[#d2d3d8]">
        <div className={`w-[80px] shrink-0 border-r-2 border-[#c4c5cb] flex items-center justify-center font-['Inter',sans-serif] text-[22px] ${r === 0 ? "bg-[#ddeffc] text-[#3f87e0]" : "bg-[#f6f6f8] text-[#6e7c8e]"}`}>{r + 1}</div>
        <div className="w-[66px] shrink-0 border-r-2 border-[#6e6f77] flex items-center justify-center text-[#c9c9cc] text-[22px] font-['Inter',sans-serif]">Title</div>
        {COLS.map((c, i) => {
          const v = DATA[r]?.[i] ?? "";
          const base = `${i === 0 ? "w-[161px]" : "w-[162px]"} shrink-0 border-r-2 ${isGroupEnd(i) ? "border-[#7f8087]" : "border-[#d2d3d8]"}`;
          if (r === 0 && i === 0)
            return (
              <div key={c} className={`${base} relative`}>
                <div className="absolute -left-[1px] -top-[2px] right-[-1px] bottom-[-2px] border-[3px] border-[#3d78d8] flex items-center pl-[6px] text-[#111]">
                  <span className="bg-[#b5d5f8] leading-[24px]">0</span>
                </div>
              </div>
            );
          return (
            <div key={c} className={`${base} flex items-center justify-end pr-[5px] text-[#141416]`}>
              {v}
            </div>
          );
        })}
      </div>
    ))}
  </div>
);

const SegIcon = {
  page: <svg width="22" height="34" viewBox="0 0 22 34" fill="none"><path d="M1.500 1.500H14L20.500 8V32.500H1.500z" stroke="#000" strokeWidth="2" /><path d="M14 1.500V8H20.500" stroke="#000" strokeWidth="1.500" /></svg>,
  grid: <svg width="24" height="34" viewBox="0 0 24 34" fill="none"><path d="M1.500 1.500H9.500V14H1.500zM14.500 1.500H22.500V14H14.500zM1.500 20H9.500V32.500H1.500zM14.500 20H22.500V32.500H14.500z" stroke="#000" strokeWidth="2" /></svg>,
  tbl: <svg width="28" height="34" viewBox="0 0 28 34" fill="none"><rect x="1" y="1" width="26" height="32" stroke="#000" strokeWidth="2" /><path d="M9 1V33M19 1V33M1 12H27M1 22H27" stroke="#000" strokeWidth="1.500" /></svg>,
  info: <svg width="24" height="32" viewBox="0 0 24 32" fill="none"><ellipse cx="12" cy="16" rx="10.500" ry="14" stroke="#000" strokeWidth="2" /><text x="8.500" y="23" fontSize="19" fontWeight="700" fontStyle="italic" fontFamily="Liberation Serif" fill="#000">i</text></svg>,
  rows: <svg width="28" height="28" viewBox="0 0 28 28" fill="none"><path d="M2 3H26V9H2zM2 19H26V25H2z" stroke="#000" strokeWidth="2" /></svg>,
  line: <svg width="28" height="34" viewBox="0 0 28 34" fill="none"><path d="M2 0V32H28" stroke="#000" strokeWidth="2" /><path d="M3 28L10 6L17 24L22 14L26 22" stroke="#000" strokeWidth="1.200" /></svg>,
  res: <svg width="28" height="34" viewBox="0 0 28 34" fill="none"><path d="M1 8C8 0 14 10 27 4M1 14H27M2 33V22M2 33H27M10 33V24M18 33V26M25 33V23" stroke="#000" strokeWidth="1.500" /></svg>,
};

const Lens = ({ minus = false, className }: { minus?: boolean; className?: string }) => (
  <Svg w={32} h={40} className={className}>
    <path d="M20 24L30 39" stroke="#b5651d" strokeWidth="4" />
    <ellipse cx="12" cy="14" rx="11" ry="13" fill="#e8e8ea" stroke="#333" strokeWidth="2" />
    <path d={minus ? "M6 14H18" : "M6 14H18M12 8V20"} stroke="#333" strokeWidth="4" />
  </Svg>
);

const Footer = () => (
  <div className="h-[55px] shrink-0 bg-[#efeff0] border-t-2 border-[#a0a0a3] flex items-center text-[#333]">
    <Svg w={30} h={32} className="ml-[21px]">
      <rect x="1" y="1" width="28" height="30" fill="#fafafa" stroke="#a3a3a7" strokeWidth="2" />
      <path d="M11 1V31" stroke="#a3a3a7" strokeWidth="2" />
      <path d="M26 8V24L16 16z" fill="#85858a" />
    </Svg>
    <Svg w={20} h={34} className="ml-[231px]">
      <path d="M19 1V33L1 17z" fill="#59c142" stroke="#2f7d28" strokeWidth="1.500" />
    </Svg>
    <Svg w={20} h={34} className="ml-[32px]">
      <path d="M1 1V33L19 17z" fill="#59c142" stroke="#2f7d28" strokeWidth="1.500" />
    </Svg>
    <Svg w={30} h={38} className="ml-[28px]">
      <path d="M19 24L28 37" stroke="#e8c77a" strokeWidth="5" />
      <ellipse cx="13" cy="15" rx="12" ry="14" fill="#a9d7a5" />
      <ellipse cx="19" cy="8" rx="4" ry="5" fill="#fff" />
    </Svg>
    <div className="ml-[21px] w-[2px] h-[48px] bg-[#c5c5c8]" />
    <div className="ml-[27px] w-[109px] h-[39px] rounded-[10px] border-2 border-[#c2c2c5] bg-white flex overflow-hidden">
      <div className="w-[55px] bg-[#6e6e70] flex items-center justify-center">{SegIcon.page}</div>
      <div className="flex-1 flex items-center justify-center">{SegIcon.grid}</div>
    </div>
    <div className="ml-[91px] w-[221px] h-[39px] rounded-[10px] border-2 border-[#c2c2c5] bg-white flex overflow-hidden">
      <div className="w-[44px] bg-[#6e6e70] flex items-center justify-center">{SegIcon.tbl}</div>
      <div className="w-[44px] border-r border-[#dedee0] flex items-center justify-center">{SegIcon.info}</div>
      <div className="w-[44px] border-r border-[#dedee0] flex items-center justify-center">{SegIcon.rows}</div>
      <div className="w-[44px] border-r border-[#dedee0] flex items-center justify-center">{SegIcon.line}</div>
      <div className="flex-1 flex items-center justify-center">{SegIcon.res}</div>
    </div>
    <div className="ml-[92px] w-[508px] h-[30px] rounded-[8px] border-2 border-[#c2c2c5] bg-white flex items-center overflow-hidden text-[22px] text-[#26262a]">
      <span className="pl-[1px]">XY: Entering replicate data</span>
      <span className="ml-auto w-[31px] h-full bg-[#96969a] flex items-center justify-center">
        <span className="w-[12px] h-[3px] bg-white rounded-full" />
      </span>
    </div>
    <Svg w={32} h={38} className="ml-[26px]">
      <g stroke="#6d6d72" strokeWidth="3" fill="none">
        <rect x="17" y="2" width="9" height="18" rx="4.500" transform="rotate(35 21 11)" />
        <rect x="5" y="18" width="9" height="18" rx="4.500" transform="rotate(35 9 27)" />
      </g>
    </Svg>
    <Tri className="ml-[5px]" />
    <div className="ml-[12px] w-[2px] h-[48px] bg-[#c5c5c8]" />
    <Tbl className="ml-[27px]" w={32} h={32} />
    <span className="ml-[15px] text-[22px] text-[#3a3a3e] whitespace-nowrap">Row 1, X: Hours</span>
    <div className="ml-auto w-[2px] h-[48px] bg-[#c5c5c8]" />
    <Lens minus className="ml-[13px]" />
    <div className="ml-[16px] w-[192px] h-[8px] rounded-full bg-[#dfdfe1] relative">
      <div className="w-[40px] h-full rounded-l-full bg-[#2a84f5]" />
      <div className="absolute left-[27px] -top-[12px] w-[32px] h-[33px] rounded-full bg-white shadow-[0_1px_3px_#9a9a9e]" />
    </div>
    <Lens className="ml-[16px] mr-[24px]" />
  </div>
);

const Wallpaper = () => (
  <svg className="absolute inset-0 w-full h-full" viewBox="0 0 2942 1758" preserveAspectRatio="none">
    <defs>
      <linearGradient id="lft" x1="0" y1="0" x2="0" y2="1">
        <stop offset="0" stopColor="#5a74c4" />
        <stop offset="0.05" stopColor="#5a72bd" />
        <stop offset="0.08" stopColor="#b96f60" />
        <stop offset="0.2" stopColor="#c57762" />
        <stop offset="0.205" stopColor="#d8874f" />
        <stop offset="0.35" stopColor="#d6834f" />
        <stop offset="0.36" stopColor="#ab6a78" />
        <stop offset="0.55" stopColor="#85609f" />
        <stop offset="0.8" stopColor="#6d62a9" />
        <stop offset="1" stopColor="#5a6db4" />
      </linearGradient>
      <linearGradient id="rgt" x1="0" y1="0" x2="0" y2="1">
        <stop offset="0" stopColor="#eda163" />
        <stop offset="0.14" stopColor="#dc9a65" />
        <stop offset="0.15" stopColor="#d9a674" />
        <stop offset="0.43" stopColor="#d9935f" />
        <stop offset="0.45" stopColor="#dba577" />
        <stop offset="1" stopColor="#d9a87c" />
      </linearGradient>
      <linearGradient id="nav" x1="0" y1="0" x2="1" y2="0">
        <stop offset="0" stopColor="#04207f" />
        <stop offset="0.15" stopColor="#05258a" />
        <stop offset="0.45" stopColor="#040c60" />
        <stop offset="0.7" stopColor="#04106a" />
        <stop offset="0.92" stopColor="#041c7c" />
        <stop offset="1" stopColor="#082c88" />
      </linearGradient>
      <linearGradient id="pur" x1="0" y1="0" x2="1" y2="0">
        <stop offset="0" stopColor="#9a6ba5" />
        <stop offset="0.4" stopColor="#6c6cb8" />
        <stop offset="0.7" stopColor="#7c64ad" />
        <stop offset="1" stopColor="#7b69b2" />
      </linearGradient>
    </defs>
    <rect x="0" y="0" width="40" height="1758" fill="url(#lft)" />
    <rect x="2900" y="0" width="42" height="1758" fill="url(#rgt)" />
    <polygon points="0,0 172,0 150,24 0,24" fill="#5b73c3" />
    <polygon points="172,0 245,0 212,24 150,24" fill="#8f6aa8" />
    <polygon points="245,0 560,0 535,24 212,24" fill="#ea8c52" />
    <polygon points="560,0 700,0 680,24 535,24" fill="#eeae72" />
    <polygon points="700,0 1110,0 1095,24 680,24" fill="#eda165" />
    <polygon points="1110,0 1240,0 1232,24 1095,24" fill="#edcb91" />
    <polygon points="1240,0 1950,0 1956,24 1232,24" fill="url(#pur)" />
    <polygon points="1950,0 2555,0 2578,24 1956,24" fill="#ebc58d" />
    <polygon points="2555,0 2942,0 2942,24 2578,24" fill="#eea064" />
    <polygon points="0,1700 70,1700 62,1758 0,1758" fill="#6a74b6" />
    <polygon points="70,1700 165,1700 140,1758 62,1758" fill="#a86c74" />
    <polygon points="165,1700 355,1700 330,1758 140,1758" fill="#c78c55" />
    <polygon points="355,1700 2942,1700 2942,1758 330,1758" fill="url(#nav)" />
    <polygon points="2910,1676 2942,1704 2942,1758 2910,1758" fill="#082c88" />
  </svg>
);

export default function App() {
  return (
    <div className="relative w-[2942px] h-[1758px] overflow-hidden font-['Inter',sans-serif]">
      <Wallpaper />
      <div className="relative ml-[24px] w-[2890px] pt-[22px]">
        <div className="h-[1697px] rounded-[20px] overflow-hidden flex flex-col bg-[#f3f2f7] shadow-[0_0_2px_#8a8a8a]">
          <div className="h-[56px] shrink-0 flex items-center relative">
            <div className="ml-[16px] flex gap-[16px]">
              <span className="w-[24px] h-[24px] rounded-full bg-[#ff5f57]" />
              <span className="w-[24px] h-[24px] rounded-full bg-[#febc2e]" />
              <span className="w-[24px] h-[24px] rounded-full bg-[#28c840]" />
            </div>
            <div className="absolute left-[1337px] top-[10px] flex items-center text-[26px] text-[#3c3c42] whitespace-nowrap">
              <span className="font-bold">Untitled —</span>
              <span className="ml-[10px]">Edited</span>
              <svg width="16" height="10" viewBox="0 0 16 10" fill="none" className="ml-[6px] mt-[3px]"><path d="M1.500 1.500L8 8L14.500 1.500" stroke="#3c3c42" strokeWidth="2" /></svg>
            </div>
          </div>
          <Toolbar />
          <div className="flex h-[1430px] shrink-0">
            <Sidebar />
            <div className="flex-1 min-w-0 flex flex-col bg-[#fafafa]">
              <div className="flex h-[1400px] shrink-0">
                <Grid />
                <div className="flex-1 border-l-2 border-[#e9e9ec] pl-[7px] pt-[6px]">
                  <div className="w-[15px] h-[605px] rounded-full bg-[#c1c1c3]" />
                </div>
              </div>
              <div className="h-[30px] pl-[8px] pt-[8px]">
                <div className="w-[669px] h-[16px] rounded-full bg-[#c1c1c3]" />
              </div>
            </div>
          </div>
          <Footer />
        </div>
      </div>
    </div>
  );
}
